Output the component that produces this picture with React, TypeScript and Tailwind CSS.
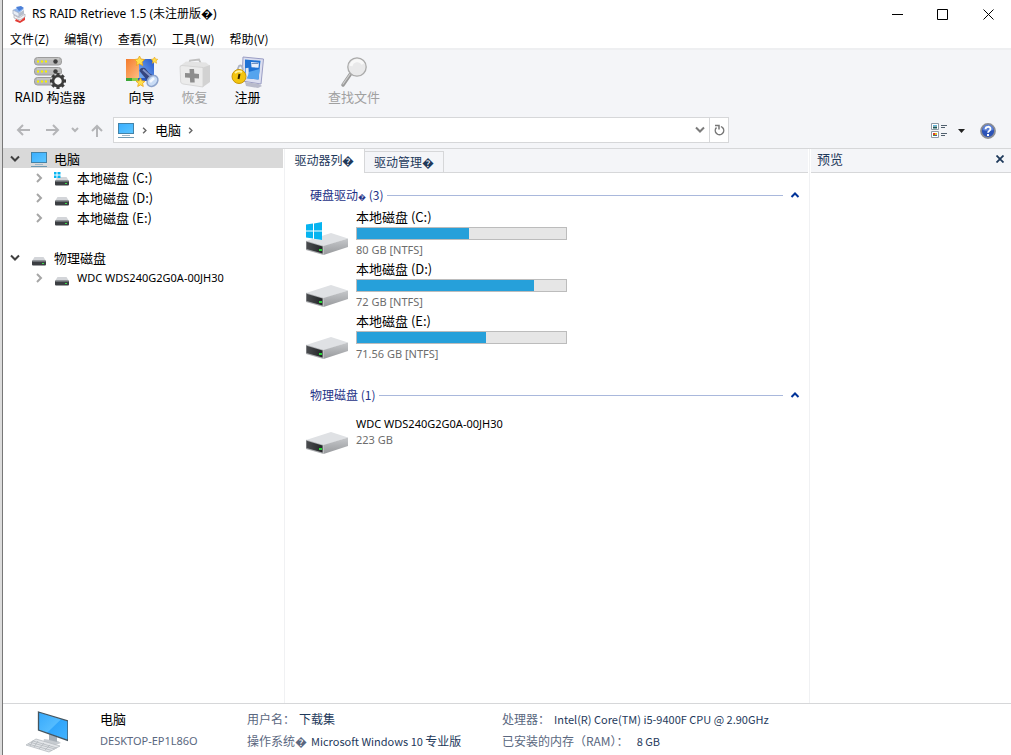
import type { ReactNode } from "react";

function MonitorIcon() {
  return (
    <svg width="18" height="16" viewBox="0 0 18 16" className="shrink-0">
      <defs>
        <linearGradient id="scr" x1="0" y1="0" x2="1" y2="1">
          <stop offset="0" stopColor="#3aaeff" />
          <stop offset="1" stopColor="#5cc6ff" />
        </linearGradient>
      </defs>
      <rect x="1.500" y="1.500" width="15" height="10" fill="url(#scr)" stroke="#4483a8" />
      <path d="M5 13.5h8" stroke="#9db6c6" />
      <path d="M1 15.5h16" stroke="#6f9ab3" />
    </svg>
  );
}

function WindowsFlag() {
  return <path d="M0 2.5L7 1.5V8.5H0ZM8 1.4L16 0V8.5H8ZM0 9.5H7V16.5L0 15.5ZM8 9.5H16V18L8 16.7Z" fill="#06b4f0" />;
}

function SmallDrive({ system = false }: { system?: boolean }) {
  return (
    <svg width="16" height="16" viewBox="0 0 16 16" className="shrink-0">
      <path d="M3.500 7h9l2.500 4h-14z" fill="#d3d5d9" />
      <rect x="1" y="10.500" width="14" height="5" rx="1" fill="#3b3e42" />
      <path d="M1.500 11h13" stroke="#9a9ea3" />
      <rect x="11" y="13" width="2" height="1" fill="#38e048" />
      {system && <path d="M0 2h2.500v2.500H0zM3.500 2h3v2.500h-3zM0 5.500h2.500V8H0zM3.500 5.500h3V8h-3z" fill="#06b4f0" />}
    </svg>
  );
}

function LargeDrive({ system = false }: { system?: boolean }) {
  return (
    <svg width="43" height="34" viewBox="0 0 43 34" className="mt-[15px] shrink-0">
      <defs>
        <linearGradient id="side" x1="0" y1="0" x2="0" y2="1">
          <stop offset="0" stopColor="#c6c8cb" />
          <stop offset="1" stopColor="#97999c" />
        </linearGradient>
        <linearGradient id="face" x1="0" y1="0" x2="1" y2="0">
          <stop offset="0" stopColor="#4a4c4f" />
          <stop offset="1" stopColor="#232527" />
        </linearGradient>
      </defs>
      <path d="M1 19L26 11L43 16.500L18.500 24.500Z" fill="#dfe1e4" />
      <path d="M18.500 24L43 16.500V25L18.500 33Z" fill="url(#side)" />
      <path d="M1 18.700L18.500 24V33L1 28Z" fill="#a9abae" />
      <path d="M1.500 19.800L17.500 24.500V31.500L1.500 27Z" fill="url(#face)" />
      <rect x="14" y="27" width="3" height="2" fill="#2bd63a" />
      {system && (
        <g transform="translate(1 0)">
          <path d="M0 1L16 0V18L0 16Z" fill="#fff" />
          <WindowsFlag />
        </g>
      )}
    </svg>
  );
}

function AppIcon() {
  return (
    <svg width="14" height="17" viewBox="0 0 14 17">
      <path d="M1 4L7 1L12 3L7 7Z" fill="#8fb6ee" />
      <path d="M4 1L9 0L12 2L7 5Z" fill="#4a7fd8" />
      <path d="M1 4L7 7V11L1 8Z" fill="#e8edf5" stroke="#8c9bb5" strokeWidth=".6" />
      <path d="M7 7L12 4V8L7 11Z" fill="#b5bdca" />
      <path d="M2 9L7 12L13 8V11L8 14L2 12Z" fill="#f3f4f7" stroke="#9a9aa5" strokeWidth=".6" />
      <path d="M4 13L8 15L13 11V14L8 17L3 15Z" fill="#e23c35" />
    </svg>
  );
}

const gearAngles = [0, 45, 90, 135, 180, 225, 270, 315];

function RaidIcon() {
  return (
    <svg width="34" height="33" viewBox="0 0 34 33">
      {[1, 11, 21].map((y) => (
        <g key={y}>
          <rect x="1.500" y={y + 0.5} width="27" height="7.500" rx="3" fill="#b9b9b9" stroke="#9c9c9c" />
          <path d={`M4 ${y + 2}h22`} stroke="#d0d0d0" />
          <path d={`M4 ${y + 4.5}h2m2 0h2m2 0h2`} stroke="#f4f400" strokeWidth="2" />
          <circle cx="22.500" cy={y + 4.5} r="2.200" fill="#3d3d3d" />
        </g>
      ))}
      <g transform="translate(25 25)">
        <circle r="7" fill="#f4f5f8" />
        {gearAngles.map((a) => (
          <rect key={a} x="-1.600" y="-8" width="3.200" height="4" fill="#3c3c3c" transform={`rotate(${a})`} />
        ))}
        <circle r="5" fill="#f8f8f8" stroke="#3c3c3c" strokeWidth="2.600" />
      </g>
    </svg>
  );
}

function WizardIcon() {
  return (
    <svg width="34" height="33" viewBox="0 0 34 33">
      <defs>
        <linearGradient id="org" x1="0" y1="0" x2="1" y2="1">
          <stop offset="0" stopColor="#f47b2c" />
          <stop offset="1" stopColor="#ffc48a" />
        </linearGradient>
        <linearGradient id="blu" x1="1" y1="0" x2="0" y2="1">
          <stop offset="0" stopColor="#2458cc" />
          <stop offset="1" stopColor="#7fb2f2" />
        </linearGradient>
      </defs>
      <rect x="1" y="3" width="15" height="20" fill="url(#org)" />
      <rect x="14" y="3" width="15" height="20" fill="url(#blu)" />
      <rect x="1" y="22" width="6" height="3" fill="#3aa637" />
      <rect x="7" y="22" width="6" height="3" fill="#8bd04a" />
      <rect x="13" y="22" width="12" height="3" fill="#2b59c4" />
      <path d="M14.500 0l1.500 3 3.500.500-2.500 2.500.800 3.500-3.300-1.700L11.200 9.500l.800-3.500L9.500 3.500 13 3z" fill="#ffe04a" stroke="#eba51c" strokeWidth=".8" />
      <path d="M29.500 1l1 2 2.300.300-1.700 1.600.500 2.400-2.100-1.200-2.100 1.200.500-2.400L26.200 3.300l2.300-.300z" fill="#ffe04a" stroke="#eba51c" strokeWidth=".6" />
      <path d="M15.500 22l1.300 2.800 3.200.400-2.400 2.200.700 3.100-2.800-1.600-2.800 1.600.700-3.100L11 25.200l3.200-.400z" fill="#ffe04a" stroke="#eba51c" strokeWidth=".8" />
      <path d="M14.500 15Q15 11 20 12L24 17L31 21L24 29L21 23Z" fill="#35457f" />
      <path d="M18 13.500l9 8" stroke="#8294c8" strokeWidth="1.800" />
      <ellipse cx="27.500" cy="25" rx="6" ry="4.800" transform="rotate(-45 27.500 25)" fill="#c9dcf5" stroke="#8ea4cc" strokeWidth="1.500" />
      <path d="M25 26l4-4" stroke="#f3f8ff" strokeWidth="2.500" />
    </svg>
  );
}

function RestoreIcon() {
  return (
    <svg width="34" height="33" viewBox="0 0 34 33">
      <path d="M11 8L12 4.500L21 3.500L23 8" fill="none" stroke="#c0c0c0" strokeWidth="1.800" />
      <path d="M2 10L8 5.500L28 6.500L32 10L26 14L2 11Z" fill="#e3e3e3" />
      <path d="M2 11Q2 9.500 4 9.500L25 11.500V31L5 28Q3 27.500 2.700 26Z" fill="#ebebeb" stroke="#cdcdcd" strokeWidth=".7" />
      <path d="M25 11.500L32 9V26L25 31Z" fill="#d2d2d2" />
      <path d="M11.500 13h4.500l.300 4.500 4.700.500v4.500l-4.500-.300.200 4.300h-4.500l-.300-4.700-4.900-.400v-4.400l4.700.200z" fill="#8d8d8d" />
    </svg>
  );
}

function RegisterIcon() {
  return (
    <svg width="34" height="33" viewBox="0 0 34 33">
      <path d="M12 1L32.500 3L30 28L11 25Z" fill="#dcdff0" stroke="#9a9dc4" />
      <path d="M14 3.500L29.500 4.800L27.500 23.500L14 22Z" fill="#1f72d4" />
      <path d="M14 17L28.700 13L27.500 23.500L14 22Z" fill="#55a4ee" />
      <path d="M20 6l8 .700-.500 5-7-.500z" fill="#e7effc" />
      <path d="M20.500 7.500h7" stroke="#7090c0" />
      <path d="M14 26l14 2 3 2-4 2-12-2z" fill="#b9bbcb" />
      <path d="M6 15L8 10Q11 8 12 14" fill="none" stroke="#adb4c4" strokeWidth="1.800" />
      <path d="M13 23Q17 20 16 12" fill="none" stroke="#dfe9f7" strokeWidth="3" />
      <circle cx="8" cy="20.500" r="7" fill="#f3c50e" stroke="#c99708" />
      <path d="M4 17q3-3 7-1" stroke="#fff19a" strokeWidth="2" fill="none" />
      <path d="M8.500 18l-1 5" stroke="#332600" strokeWidth="2" />
    </svg>
  );
}

function FindIcon() {
  return (
    <svg width="34" height="33" viewBox="0 0 34 33">
      <path d="M13.500 18L6 29" stroke="#9a9a9a" strokeWidth="3.500" strokeLinecap="round" />
      <path d="M13 18L6 28" stroke="#cfcfcf" strokeWidth="1.200" strokeLinecap="round" />
      <circle cx="20" cy="11" r="9.200" fill="#e9e9ea" stroke="#ababab" strokeWidth="1.300" />
      <path d="M14 10a6.500 6.500 0 0 1 12-2" fill="none" stroke="#f8f8f8" strokeWidth="3" />
    </svg>
  );
}

function ComputerIcon() {
  return (
    <svg width="45" height="42" viewBox="0 0 45 42" className="shrink-0">
      <defs>
        <linearGradient id="pc" x1="0" y1="0" x2="1" y2="1">
          <stop offset="0" stopColor="#35a8fb" />
          <stop offset=".5" stopColor="#54bcff" />
          <stop offset=".52" stopColor="#30a5fb" />
          <stop offset="1" stopColor="#43b4ff" />
        </linearGradient>
      </defs>
      <path d="M21 28L35 30L38 32L30 35L20 32Z" fill="#c7ccd1" />
      <path d="M26 23L34 26V31L26 29Z" fill="#a7afb7" />
      <path d="M15.500 1L45 10V29.500L15.500 19Z" fill="url(#pc)" stroke="#44545f" strokeWidth="1.300" />
      <path d="M3 34L13 28L37 35L26 41Z" fill="#e2e5e8" stroke="#b6bbc0" strokeWidth=".8" />
      <path d="M5 33L29 39.500M8 31.500L32 38M10 30L34 37M10 29.500L7 35M15 30L11 36M21 32L16 38M27 34L22 39" stroke="#b2b8bd" strokeWidth=".8" />
    </svg>
  );
}

function Chevron({ dir, className = "" }: { dir: "down" | "right" | "up"; className?: string }) {
  const d = { down: "M1 2.500L5 6.500L9 2.500", right: "M3 1L7 5L3 9", up: "M1.500 7L5 3.500L8.500 7" }[dir];
  return (
    <svg width="10" height="10" viewBox="0 0 10 10" className={"shrink-0 " + className}>
      <path d={d} fill="none" stroke="currentColor" strokeWidth="2" />
    </svg>
  );
}

function Tool({ icon, label, disabled, className }: { icon: ReactNode; label: string; disabled?: boolean; className: string }) {
  return (
    <button disabled={disabled} className={"flex flex-col items-center text-[13px] leading-4 text-black disabled:text-[#a0a0a0] " + className}>
      {icon}
      <span className="whitespace-nowrap">{label}</span>
    </button>
  );
}

function TreeRoot({ icon, label, selected }: { icon: ReactNode; label: string; selected?: boolean }) {
  return (
    <div className={"flex items-center pl-[7px] leading-[18px] " + (selected ? "h-[19px] bg-[#d9d9d9]" : "h-5")}>
      <Chevron dir="down" className="mr-[10px] text-[#404040]" />
      <span className="mr-[6px] flex w-[18px] justify-center">{icon}</span>
      {label}
    </div>
  );
}

function TreeLeaf({ label, latin, system }: { label: string; latin?: boolean; system?: boolean }) {
  return (
    <div className="flex h-5 items-center pl-[31px]">
      <Chevron dir="right" className="mr-[10px] text-[#a6a6a6]" />
      <SmallDrive system={system} />
      <span className={"ml-[7px] whitespace-nowrap " + (latin ? "font-['Noto_Sans',sans-serif] text-[11px]" : "")}>{label}</span>
    </div>
  );
}

function GroupHeader({ children }: { children: ReactNode }) {
  return (
    <div className="flex h-5 items-center pr-2 pl-[5px] text-xs text-[#1e3287]">
      <h2 className="whitespace-nowrap">{children}</h2>
      <div className="ml-1 h-px flex-1 bg-[#a9b8dc]" />
      <button aria-label="折叠" className="ml-[7px]">
        <Chevron dir="up" className="text-[#003399]" />
      </button>
    </div>
  );
}

function Volume({ name, size, used, system }: { name: string; size: string; used: number; system?: boolean }) {
  return (
    <div className="flex h-[52px] items-start">
      <LargeDrive system={system} />
      <div className="ml-2 w-[211px]">
        <div className="h-5 text-[13px] leading-5 text-black">{name}</div>
        <div role="meter" aria-label={name} aria-valuemin={0} aria-valuemax={100} aria-valuenow={used} className="h-[13px] border border-[#bcbcbc] bg-[#e6e6e6]">
          <div className="h-full bg-[#26a0da]" style={{ width: `${used}%` }} />
        </div>
        <div className="font-['Noto_Sans',sans-serif] text-[11px] leading-[19px] text-[#6d6d6d]">{size}</div>
      </div>
    </div>
  );
}

export default function App() {
  return (
    <div className="flex min-h-screen bg-white font-['Noto_Sans_CJK_SC',sans-serif] text-[13px] text-black">
      <div className="w-[3px] shrink-0 border-r border-[#777] bg-[#dcdcdc]" />
      <div className="flex min-w-0 flex-1 flex-col">
        <header className="flex h-[30px] items-center pb-[2px] pl-[9px] text-xs">
          <AppIcon />
          <h1 className="ml-[6px] flex-1 font-['Noto_Sans','Noto_Sans_CJK_SC',sans-serif]">RS RAID Retrieve 1.5 (未注册版�)</h1>
          <button aria-label="最小化" className="flex w-[46px] justify-center">
            <svg width="11" height="11"><path d="M0 5.500h11" stroke="#000" /></svg>
          </button>
          <button aria-label="最大化" className="flex w-[45px] justify-center">
            <svg width="11" height="11"><path d="M.5.5h10v10H.5z" fill="none" stroke="#000" /></svg>
          </button>
          <button aria-label="关闭" className="flex w-[46px] justify-center">
            <svg width="11" height="11"><path d="M.5.5l10 10M10.500.5l-10 10" stroke="#000" /></svg>
          </button>
        </header>

        <nav className="flex h-[18px] items-center gap-[15px] pl-[7px] text-xs">
          {["文件(Z)", "编辑(Y)", "查看(X)", "工具(W)", "帮助(V)"].map((m) => (
            <button key={m} className="whitespace-nowrap">{m}</button>
          ))}
        </nav>

        <div className="border-t-2 border-b border-t-[#eeeff1] border-b-[#d6d7d9] bg-[#f4f5f8]">
          <div className="flex h-[67px] items-start pt-[6px]">
            <Tool icon={<RaidIcon />} label="RAID 构造器" className="ml-[2px] w-[90px]" />
            <Tool icon={<WizardIcon />} label="向导" className="ml-5 w-[53px]" />
            <Tool icon={<RestoreIcon />} label="恢复" disabled className="w-[53px]" />
            <Tool icon={<RegisterIcon />} label="注册" className="w-[53px]" />
            <Tool icon={<FindIcon />} label="查找文件" disabled className="ml-[47px] w-[66px]" />
          </div>
          <div className="flex h-[31px] items-start pr-[15px] pl-[13px]">
            <div className="flex h-[26px] w-[97px] shrink-0 items-center text-[#b4b5b8]">
              <button aria-label="后退"><svg width="14" height="12"><path d="M14 6H2M7 1L2 6l5 5" fill="none" stroke="currentColor" strokeWidth="2" /></svg></button>
              <button aria-label="前进" className="ml-4"><svg width="14" height="12"><path d="M0 6h12M7 1l5 5-5 5" fill="none" stroke="currentColor" strokeWidth="2" /></svg></button>
              <button aria-label="历史记录" className="ml-[11px]"><svg width="8" height="8"><path d="M1 2l3 3 3-3" fill="none" stroke="currentColor" strokeWidth="2" /></svg></button>
              <button aria-label="上移" className="ml-3"><svg width="12" height="13"><path d="M6 13V2M1 7l5-5 5 5" fill="none" stroke="currentColor" strokeWidth="2" /></svg></button>
            </div>
            <div className="flex h-[26px] min-w-0 flex-1 items-center border border-[#d6d7d9] bg-white pl-[3px]">
              <MonitorIcon />
              <Chevron dir="right" className="mx-[6px] h-[7px] w-[7px] text-[#666]" />
              <span className="ml-px">电脑</span>
              <Chevron dir="right" className="ml-[6px] h-[7px] w-[7px] text-[#666]" />
              <button aria-label="展开地址" className="mr-1 ml-auto flex text-[#7b7b7b]"><Chevron dir="down" /></button>
              <button aria-label="刷新" className="flex h-full w-[19px] items-center justify-center border-l border-[#d6d7d9]">
                <svg width="11" height="12" viewBox="0 0 11 12"><path d="M2.500 3.500A4.200 4.200 0 1 0 8.500 3.500M1 1.500H5V5.500M8.500 3.500L7 2.500" fill="none" stroke="#777" strokeWidth="1.500" /></svg>
              </button>
            </div>
            <div className="ml-[202px] flex h-[28px] shrink-0 items-center">
              <button aria-label="视图" className="flex items-center">
                <svg width="17" height="16">
                  <path d="M.5.5h7v6h-7zM.5 8.500h7v6h-7z" fill="#fff" stroke="#8f9aa5" />
                  <path d="M2 2h4v1H2z" fill="#5eb4dc" /><path d="M2 3.500h4v2H2z" fill="#1b5658" />
                  <path d="M2 10h2v2H2z" fill="#d83a2e" /><path d="M4 10h2v2H4z" fill="#e8bb22" /><path d="M2 12h2v1H2z" fill="#3e9b3a" /><path d="M4 12h2v1H4z" fill="#444bb5" />
                  <path d="M10 2.500h6M10 4.500h4M10 10.500h6M10 12.500h4" stroke="#50606e" />
                </svg>
                <svg width="9" height="5" className="ml-[9px]"><path d="M1 0h7L4.500 4z" fill="#222" /></svg>
              </button>
              <button aria-label="帮助" className="ml-[14px]">
                <svg width="16" height="16" viewBox="0 0 16 16">
                  <circle cx="8" cy="8" r="7" fill="#2c53b8" stroke="#8b8d94" strokeWidth="1.800" />
                  <path d="M2.500 7a5.500 5.500 0 0 1 11 0q-5 2-11 0z" fill="#5b80d8" />
                  <path d="M5.500 6.200C5.500 3 10.500 3 10.500 6 10.500 7.800 8 8 8 9.800" fill="none" stroke="#fff" strokeWidth="1.800" />
                  <rect x="7" y="11" width="2" height="2" fill="#fff" />
                </svg>
              </button>
            </div>
          </div>
        </div>

        <div className="flex flex-1">
          <aside className="w-[280px] shrink-0">
            <TreeRoot icon={<MonitorIcon />} label="电脑" selected />
            <TreeLeaf label="本地磁盘 (C:)" system />
            <TreeLeaf label="本地磁盘 (D:)" />
            <TreeLeaf label="本地磁盘 (E:)" />
            <div className="h-5" />
            <TreeRoot icon={<SmallDrive />} label="物理磁盘" />
            <TreeLeaf label="WDC WDS240G2G0A-00JH30" latin />
          </aside>

          <main className="ml-px min-w-0 flex-1 border-l border-[#f0f1f3]">
            <div role="tablist" className="flex h-6 items-end bg-[#f4f5f8] text-xs text-[#1e395b]">
              <button role="tab" aria-selected="true" className="h-6 w-20 border-r border-[#d6d7d9] bg-white pb-[2px]">驱动器列�</button>
              <button role="tab" aria-selected="false" className="h-[22px] w-[79px] border-t border-r border-b border-[#d6d7d9]">驱动管理�</button>
              <div className="h-6 flex-1 border-b border-[#d6d7d9]" />
            </div>
            <div className="pt-3 pl-5">
              <GroupHeader>硬盘驱动<span className="text-[8px]">�</span> (3)</GroupHeader>
              <div className="mt-[2px]">
                <Volume name="本地磁盘 (C:)" size="80 GB [NTFS]" used={53.8} system />
                <Volume name="本地磁盘 (D:)" size="72 GB [NTFS]" used={84.7} />
                <Volume name="本地磁盘 (E:)" size="71.56 GB [NTFS]" used={61.8} />
              </div>
              <div className="mt-[22px]">
                <GroupHeader>物理磁盘 (1)</GroupHeader>
                <div className="mt-px flex items-start">
                  <LargeDrive />
                  <div className="ml-2 pt-[10px] font-['Noto_Sans',sans-serif] text-[11px] leading-4">
                    <div>WDC WDS240G2G0A-00JH30</div>
                    <div className="text-[#6d6d6d]">223 GB</div>
                  </div>
                </div>
              </div>
            </div>
          </main>

          <aside className="ml-px w-[202px] shrink-0 border-l border-[#f0f1f3] pl-px">
            <div className="flex h-6 items-center justify-between border-b border-[#d6d7d9] bg-[#f4f5f8] pr-[7px] pb-[3px] pl-[6px] text-[#1e395b]">
              <h2>预览</h2>
              <button aria-label="关闭预览"><svg width="8" height="8"><path d="M.5.5l7 7M7.500.5l-7 7" stroke="#1e395b" strokeWidth="1.800" /></svg></button>
            </div>
          </aside>
        </div>

        <footer className="flex h-[52px] items-start border-t border-[#d6d7d9] pt-1 pl-5 text-xs leading-[22px] whitespace-nowrap text-[#1e395b]">
          <div className="pt-[3px]"><ComputerIcon /></div>
          <div className="ml-8 w-[147px]">
            <div className="text-[13px] text-black">电脑</div>
            <div className="font-['Noto_Sans',sans-serif] text-[11px] text-[#5a6780]">DESKTOP-EP1L86O</div>
          </div>
          <dl className="w-[255px]">
            <div className="flex gap-1"><dt className="text-[#5a6780]">用户名：</dt><dd>下载集</dd></div>
            <div className="flex gap-1"><dt className="text-[#5a6780]">操作系统�</dt><dd><span className="text-[11px]">Microsoft Windows 10 </span>专业版</dd></div>
          </dl>
          <dl>
            <div className="flex gap-1"><dt className="text-[#5a6780]">处理器：</dt><dd className="text-[11px]">Intel(R) Core(TM) i5-9400F CPU @ 2.90GHz</dd></div>
            <div className="flex gap-2"><dt className="text-[#5a6780]">已安装的内存（RAM）：</dt><dd className="text-[11px]">8 GB</dd></div>
          </dl>
        </footer>
      </div>
    </div>
  );
}
